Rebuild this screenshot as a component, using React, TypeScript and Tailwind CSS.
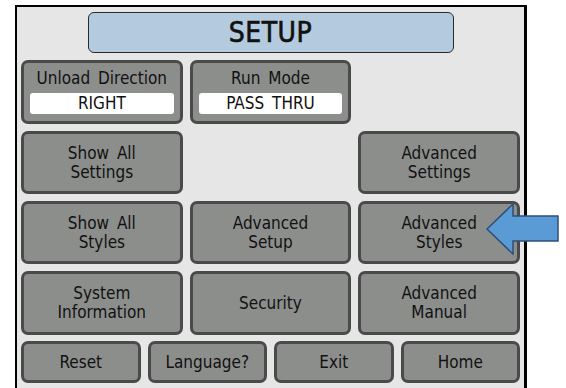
import React from "react";

const font = { fontFamily: '"DejaVu Sans Condensed", "DejaVu Sans", sans-serif' };

function Btn({ children, className = "" }: { children: React.ReactNode; className?: string }) {
  return (
    <div
      className={
        "flex flex-col items-center justify-center rounded-[7px] border-[3px] border-[#4a4a4a] bg-[#8c8e8c] text-[17px] leading-[19px] text-[#111] [word-spacing:3px] " +
        className
      }
    >
      {children}
    </div>
  );
}

function ValueBtn({ label, value }: { label: string; value: string }) {
  return (
    <div className="flex flex-col items-stretch rounded-[7px] border-[3px] border-[#4a4a4a] bg-[#8c8e8c] px-[6px] pt-[6px] text-[17px] leading-[19px] text-[#111] [word-spacing:3px]">
      <div className="text-center">{label}</div>
      <div className="mt-[5px] h-[21px] rounded-[3px] bg-white text-center leading-[21px]">{value}</div>
    </div>
  );
}

export default function App() {
  return (
    <div className="relative h-[388px] w-[566px] overflow-hidden bg-white" style={font}>
      <div className="ml-[15px] mt-[5px] h-[400px] w-[512px] border-l-2 border-r-[3px] border-t-2 border-black bg-[#e6e6e6] px-[4px] pt-[5px]">
        <div className="mx-auto flex h-[41px] w-[366px] items-center justify-center rounded-[6px] border border-[#2a2a2a] bg-[#b4cbdf] pt-[1px] text-[28px] font-medium tracking-[0.5px] text-[#111] [-webkit-text-stroke:0.6px_#111]">
          SETUP
        </div>
        <div className="mt-[7px] grid grid-cols-3 grid-rows-[64px_63px_63px_64px] gap-[7px]">
          <ValueBtn label="Unload Direction" value="RIGHT" />
          <ValueBtn label="Run Mode" value="PASS THRU" />
          <div />
          <Btn>
            <span>Show All</span>
            <span>Settings</span>
          </Btn>
          <div />
          <Btn>
            <span>Advanced</span>
            <span>Settings</span>
          </Btn>
          <Btn>
            <span>Show All</span>
            <span>Styles</span>
          </Btn>
          <Btn>
            <span>Advanced</span>
            <span>Setup</span>
          </Btn>
          <Btn>
            <span>Advanced</span>
            <span>Styles</span>
          </Btn>
          <Btn>
            <span>System</span>
            <span>Information</span>
          </Btn>
          <Btn>
            <span>Security</span>
          </Btn>
          <Btn>
            <span>Advanced</span>
            <span>Manual</span>
          </Btn>
        </div>
        <div className="mt-[6px] grid h-[42px] grid-cols-4 gap-[7px]">
          <Btn>Reset</Btn>
          <Btn>Language?</Btn>
          <Btn>Exit</Btn>
          <Btn>Home</Btn>
        </div>
      </div>
      <svg className="absolute left-0 top-0" width="566" height="388" viewBox="0 0 566 388">
        <polygon
          points="487,229 513,204 513,216 558,216 558,241 513,241 513,254"
          fill="#5b9bd5"
          stroke="#2f4f7a"
          strokeWidth="1.5"
          strokeLinejoin="miter"
        />
      </svg>
    </div>
  );
}
